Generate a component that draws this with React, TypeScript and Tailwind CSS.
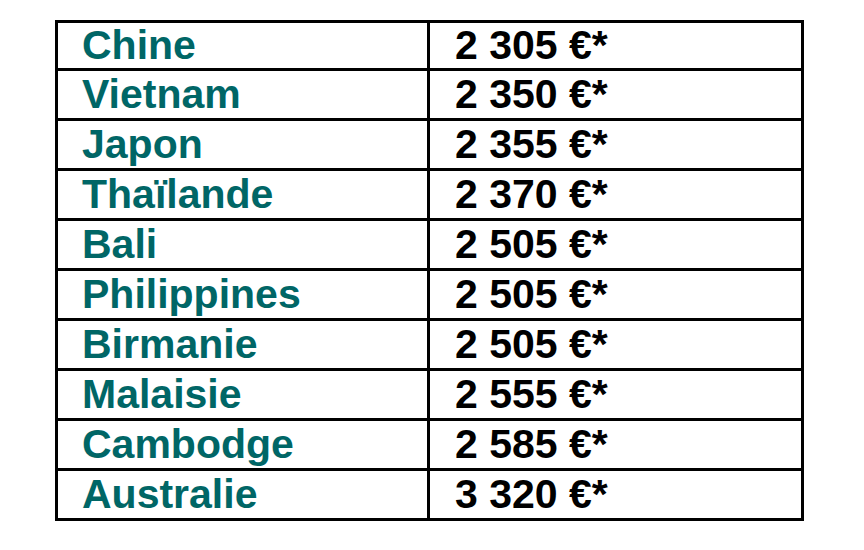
const rows: [string, string][] = [
  ['Chine', '2 305 €*'],
  ['Vietnam', '2 350 €*'],
  ['Japon', '2 355 €*'],
  ['Thaïlande', '2 370 €*'],
  ['Bali', '2 505 €*'],
  ['Philippines', '2 505 €*'],
  ['Birmanie', '2 505 €*'],
  ['Malaisie', '2 555 €*'],
  ['Cambodge', '2 585 €*'],
  ['Australie', '3 320 €*'],
];

export default function App() {
  return (
    <div className="w-[864px] h-[550px] bg-white pt-[20px] pl-[55px] font-['Liberation_Sans',Arial,sans-serif] font-bold text-[41px]">
      <div className="w-[749px] border-[3px] border-black flex flex-col">
        {rows.map(([country, price], i) => (
          <div
            key={country}
            className={
              i === 0
                ? 'flex h-[45px]'
                : 'flex h-[50px] border-t-[3px] border-black'
            }
          >
            <div className="w-[369px] flex items-center pl-[24px] text-[#006666] leading-none">
              {country}
            </div>
            <div className="flex-1 flex items-center pl-[25px] border-l-[3px] border-black text-black leading-none">
              {price}
            </div>
          </div>
        ))}
      </div>
    </div>
  );
}
